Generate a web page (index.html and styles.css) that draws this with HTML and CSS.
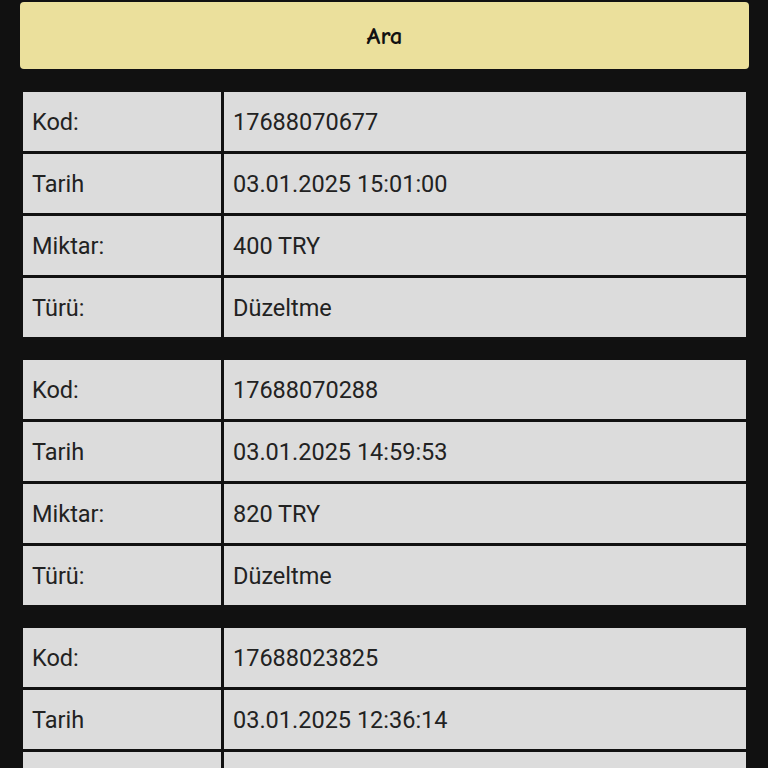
FILE: index.html
```html
<!DOCTYPE html>
<html lang="tr">
<head>
    <meta charset="utf-8">
    <meta name="viewport" content="width=device-width, initial-scale=1.0">
    <title>Hareketler</title>
    <link rel="stylesheet" href="styles.css">
</head>
<body>

    <div class="page">
        <button class="search-button">Ara</button>

        <!-- kayıt 1 -->
        <table class="record">
            <tr><td class="label">Kod:</td><td>17688070677</td></tr>
            <tr><td class="label">Tarih</td><td>03.01.2025 15:01:00</td></tr>
            <tr><td class="label">Miktar:</td><td>400 TRY</td></tr>
            <tr><td class="label">Türü:</td><td>Düzeltme</td></tr>
        </table>

        <!-- kayıt 2 -->
        <table class="record">
            <tr><td class="label">Kod:</td><td>17688070288</td></tr>
            <tr><td class="label">Tarih</td><td>03.01.2025 14:59:53</td></tr>
            <tr><td class="label">Miktar:</td><td>820 TRY</td></tr>
            <tr><td class="label">Türü:</td><td>Düzeltme</td></tr>
        </table>

        <!-- kayıt 3 -->
        <table class="record">
            <tr><td class="label">Kod:</td><td>17688023825</td></tr>
            <tr><td class="label">Tarih</td><td>03.01.2025 12:36:14</td></tr>
            <tr><td class="label">&nbsp;</td><td>&nbsp;</td></tr>
        </table>
    </div>

</body>
</html>
```

FILE: styles.css
```css
html, body {
    margin: 0;
    background-color: #111;
    overflow: hidden;
}

.page {
    padding: 2px 19px 0 20px;
    font-family: Roboto, "Noto Sans", sans-serif;
}

/* Ara butonu */
.search-button {
    display: block;
    width: 100%;
    height: 67px;
    background-color: #ebe09c;
    border: none;
    border-radius: 4px;
    font-family: "Comic Sans MS", "Comic Neue", "DejaVu Sans", cursive;
    font-size: 25px;
    font-weight: bold;
    color: #111;
    cursor: pointer;
}

/* kayıt tablosu */
.record {
    width: 100%;
    margin-top: 20px;
    border-spacing: 3px;
    background-color: #111;
    table-layout: fixed;
}

.record + .record {
    margin-top: 17px;
}

.record td {
    height: 59px;
    padding: 0 0 0 9px;
    background-color: #dcdcdc;
    color: #222;
    font-size: 23.5px;
    vertical-align: middle;
    white-space: nowrap;
}

.record td.label {
    width: 189px;
}
```
